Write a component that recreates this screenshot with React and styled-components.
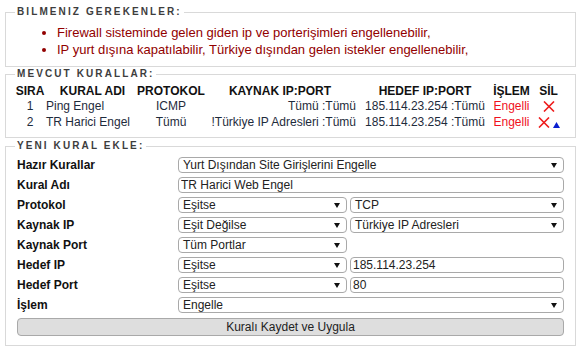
import React from "react";
import styled, { createGlobalStyle } from "styled-components";

const GlobalStyle = createGlobalStyle`
  html, body {
    margin: 0;
    padding: 0;
    background: #ffffff;
  }
  body {
    padding: 6px 6px 0 5px;
    font-family: "Liberation Sans", Arial, sans-serif;
    color: #222;
  }
`;

const rules = [
  {
    id: 1,
    name: "Ping Engel",
    protocol: "ICMP",
    source: "Tümü :Tümü",
    target: "185.114.23.254 :Tümü",
    action: "Engelli",
    movable: false,
  },
  {
    id: 2,
    name: "TR Harici Engel",
    protocol: "Tümü",
    source: "!Türkiye IP Adresleri :Tümü",
    target: "185.114.23.254 :Tümü",
    action: "Engelli",
    movable: true,
  },
];

function CrossIcon() {
  return (
    <svg width="12" height="11" viewBox="0 0 12 11">
      <path d="M1 0.5 L11 10.5 M11 0.5 L1 10.5" stroke="#ee1c1c" strokeWidth="1.6" fill="none" />
    </svg>
  );
}

function UpIcon() {
  return (
    <svg width="7" height="6" viewBox="0 0 7 6">
      <polygon points="3.5,0 7,6 0,6" fill="#0a1fd0" />
    </svg>
  );
}

function Arrow() {
  return (
    <svg width="6" height="5" viewBox="0 0 6 5">
      <polygon points="0,0 6,0 3,5" fill="#111" />
    </svg>
  );
}

function Select({ children }) {
  return (
    <SelectBox>
      <span>{children}</span>
      <Arrow />
    </SelectBox>
  );
}

export default function App() {
  return (
    <>
      <GlobalStyle />
      <Panel>
        <Legend>BILMENIZ GEREKENLER:</Legend>
        <Notes>
          <li>Firewall sisteminde gelen giden ip ve porterişimleri engellenebilir,</li>
          <li>IP yurt dışına kapatılabilir, Türkiye dışından gelen istekler engellenebilir,</li>
        </Notes>
      </Panel>

      <Panel $top={4} $bottom={7}>
        <Legend>MEVCUT KURALLAR:</Legend>
        <RuleGrid>
          <HeadCell>SIRA</HeadCell>
          <HeadCell>KURAL ADI</HeadCell>
          <HeadCell>PROTOKOL</HeadCell>
          <HeadCell>KAYNAK IP:PORT</HeadCell>
          <HeadCell>HEDEF IP:PORT</HeadCell>
          <HeadCell>İŞLEM</HeadCell>
          <HeadCell>SİL</HeadCell>
          {rules.map((r) => (
            <React.Fragment key={r.id}>
              <Cell>{r.id}</Cell>
              <Cell $align="flex-start">{r.name}</Cell>
              <Cell>{r.protocol}</Cell>
              <Cell $align="flex-end">{r.source}</Cell>
              <Cell>{r.target}</Cell>
              <Cell $red>{r.action}</Cell>
              <Cell>
                <Actions>
                  <CrossIcon />
                  {r.movable && <UpIcon />}
                </Actions>
              </Cell>
            </React.Fragment>
          ))}
        </RuleGrid>
      </Panel>

      <Panel $top={5} $bottom={9}>
        <Legend>YENI KURAL EKLE:</Legend>
        <Form>
          <Row>
            <Label>Hazır Kurallar</Label>
            <Controls>
              <Select>Yurt Dışından Site Girişlerini Engelle</Select>
            </Controls>
          </Row>
          <Row>
            <Label>Kural Adı</Label>
            <Controls>
              <TextInput defaultValue="TR Harici Web Engel" />
            </Controls>
          </Row>
          <Row>
            <Label>Protokol</Label>
            <Controls $split>
              <Select>Eşitse</Select>
              <Select>TCP</Select>
            </Controls>
          </Row>
          <Row>
            <Label>Kaynak IP</Label>
            <Controls $split>
              <Select>Eşit Değilse</Select>
              <Select>Türkiye IP Adresleri</Select>
            </Controls>
          </Row>
          <Row>
            <Label>Kaynak Port</Label>
            <Controls $split>
              <Select>Tüm Portlar</Select>
            </Controls>
          </Row>
          <Row>
            <Label>Hedef IP</Label>
            <Controls $split>
              <Select>Eşitse</Select>
              <TextInput defaultValue="185.114.23.254" />
            </Controls>
          </Row>
          <Row>
            <Label>Hedef Port</Label>
            <Controls $split>
              <Select>Eşitse</Select>
              <TextInput defaultValue="80" />
            </Controls>
          </Row>
          <Row>
            <Label>İşlem</Label>
            <Controls>
              <Select>Engelle</Select>
            </Controls>
          </Row>
          <SaveButton type="button">Kuralı Kaydet ve Uygula</SaveButton>
        </Form>
      </Panel>
    </>
  );
}

const Panel = styled.fieldset`
  box-sizing: border-box;
  width: 571px;
  margin: 0 0 ${(p) => (p.$bottom === 7 ? 2 : 1)}px;
  padding: ${(p) => p.$top ?? 6}px 11px ${(p) => p.$bottom ?? 8}px;
  border: 1px solid #d9d9d9;
  min-width: 0;
`;

const Legend = styled.legend`
  margin-left: -2px;
  padding: 0 2px 0 2px;
  font: 700 10px/12px "Liberation Sans", Arial, sans-serif;
  letter-spacing: 2.1px;
  color: #3d3d3d;
`;

const Notes = styled.ul`
  margin: 0;
  padding-left: 40px;
  list-style: disc;
  color: #920000;
  font-size: 13px;
  line-height: 17px;
`;

const RuleGrid = styled.div`
  display: grid;
  grid-template-columns: 26px 99px 58px 160px 130px 43px 31px;
  grid-auto-rows: 16px;
  grid-template-rows: 14px;
  font-size: 12px;
`;

const HeadCell = styled.div`
  display: flex;
  justify-content: center;
  align-items: center;
  white-space: nowrap;
  font-weight: 700;
  color: #111;
`;

const Cell = styled.div`
  display: flex;
  justify-content: ${(p) => p.$align || "center"};
  align-items: center;
  white-space: nowrap;
  padding: ${(p) => (p.$align === "flex-start" ? "0 0 0 3px" : p.$align === "flex-end" ? "0 4px 0 0" : "0")};
  color: ${(p) => (p.$red ? "#f0101e" : "#1e2b3c")};
`;

const Actions = styled.span`
  display: inline-flex;
  align-items: flex-end;
  gap: 3px;
`;

const Form = styled.div`
  display: flex;
  flex-direction: column;
  gap: 4px;
`;

const Row = styled.div`
  display: flex;
  align-items: center;
  height: 16px;
`;

const Label = styled.div`
  width: 161px;
  flex: none;
  font-size: 12px;
  font-weight: 700;
  color: #111;
`;

const Controls = styled.div`
  flex: 1;
  display: grid;
  grid-template-columns: ${(p) => (p.$split ? "169px 1fr" : "1fr")};
  column-gap: 3px;
`;

const SelectBox = styled.div`
  box-sizing: border-box;
  height: 16px;
  display: flex;
  align-items: center;
  justify-content: space-between;
  padding: 0 6px 0 4px;
  border: 1px solid #a9a9a9;
  border-radius: 4px;
  background: #fff;
  font-size: 12px;
  color: #222;
  white-space: nowrap;
`;

const TextInput = styled.input`
  box-sizing: border-box;
  width: 100%;
  height: 16px;
  margin: 0;
  padding: 0 2px;
  border: 1px solid #a9a9a9;
  border-radius: 4px;
  background: #fff;
  font: 12px "Liberation Sans", Arial, sans-serif;
  color: #222;
  outline: none;
`;

const SaveButton = styled.button`
  box-sizing: border-box;
  margin-top: 1px;
  height: 18px;
  padding: 0;
  border: 1px solid #a9a9a9;
  border-radius: 4px;
  background: #dedede;
  font: 12px "Liberation Sans", Arial, sans-serif;
  color: #222;
`;
